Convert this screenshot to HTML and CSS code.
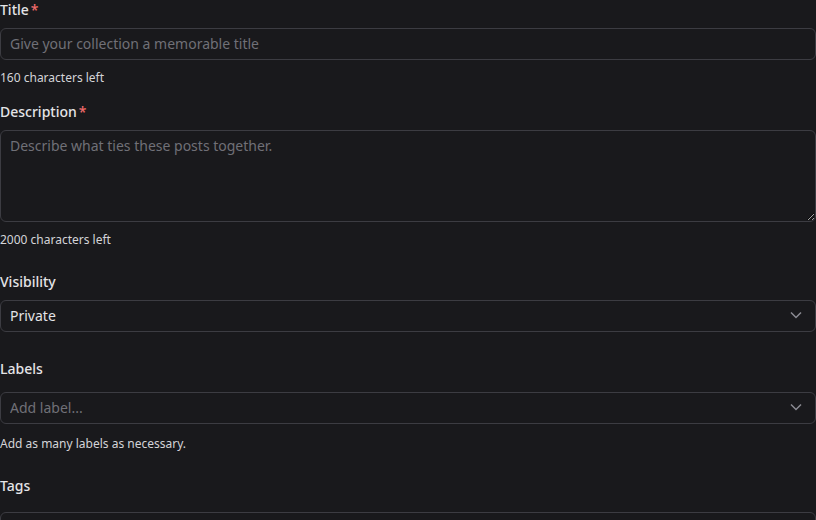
FILE: index.html
```html
<!DOCTYPE html>
<html lang="en">
<head>
    <meta charset="UTF-8">
    <title>New Collection</title>

    <link rel="stylesheet" href="styles.css">
</head>
<body>
    <form class="collectionForm">
        <div class="field field-title">
            <label class="fieldLabel" for="title">Title<span class="required">*</span></label>
            <input class="textInput" type="text" id="title" name="title" placeholder="Give your collection a memorable title">
            <p class="fieldHelp">160 characters left</p>
        </div>

        <div class="field field-description">
            <label class="fieldLabel" for="description">Description<span class="required">*</span></label>
            <textarea class="textInput textArea" id="description" name="description" placeholder="Describe what ties these posts together."></textarea>
            <p class="fieldHelp">2000 characters left</p>
        </div>

        <div class="field field-visibility">
            <label class="fieldLabel" for="visibility">Visibility</label>
            <div class="selectBox" id="visibility">
                <span class="selectValue">Private</span>
                <svg class="chevron" width="12" height="8" viewBox="0 0 12 8"><path d="M1 1.5l5 5 5-5" fill="none" stroke="currentColor" stroke-width="1.5"/></svg>
            </div>
        </div>

        <div class="field field-labels">
            <label class="fieldLabel fieldLabel-wide" for="labels">Labels</label>
            <div class="selectBox">
                <input class="comboInput" type="text" id="labels" name="labels" placeholder="Add label...">
                <svg class="chevron" width="12" height="8" viewBox="0 0 12 8"><path d="M1 1.5l5 5 5-5" fill="none" stroke="currentColor" stroke-width="1.5"/></svg>
            </div>
            <p class="fieldHelp fieldHelp-loose">Add as many labels as necessary.</p>
        </div>

        <div class="field field-tags">
            <label class="fieldLabel fieldLabel-wider" for="tags">Tags</label>
            <div class="selectBox">
                <input class="comboInput" type="text" id="tags" name="tags" placeholder="Add tag...">
            </div>
        </div>
    </form>
</body>
</html>
```

FILE: styles.css
```css
* {
    box-sizing: border-box;
}

html, body {
    background: #19191c;
}

body {
    font-family: "Noto Sans", "Open Sans", sans-serif;
    color: #e4e4e7;
    margin: 0;
    padding: 0;
}

.collectionForm {
    display: flex;
    flex-direction: column;
}

.field {
    display: flex;
    flex-direction: column;
}

.field-title {
    margin-bottom: 16px;
}

.field-description {
    margin-bottom: 24px;
}

.field-visibility {
    margin-bottom: 27px;
}

.field-labels {
    margin-bottom: 24px;
}

.fieldLabel {
    font-size: 14px;
    line-height: 20px;
    font-weight: 500;
    color: #e4e4e7;
    margin-bottom: 8px;
}

.fieldLabel-wide {
    margin-bottom: 13px;
}

.fieldLabel-wider {
    margin-bottom: 16px;
}

.required {
    color: #f26b6b;
    margin-left: 2px;
}

.textInput {
    display: block;
    width: 100%;
    height: 32px;
    padding: 0 9px 2px;
    font-family: inherit;
    font-size: 14px;
    color: #e4e4e7;
    background: #19191c;
    border: 1px solid #3c3c42;
    border-radius: 6px;
    outline: none;
}

.textInput::placeholder,
.comboInput::placeholder {
    color: #707077;
}

.textArea {
    height: 92px;
    padding: 5px 9px;
    line-height: 20px;
    resize: vertical;
}

.fieldHelp {
    font-size: 12px;
    line-height: 16px;
    color: #d4d4d8;
    margin: 10px 0 0;
}

.fieldHelp-loose {
    margin-top: 12px;
}

.selectBox {
    display: flex;
    align-items: center;
    height: 32px;
    padding: 0 13px 2px 9px;
    border: 1px solid #3c3c42;
    border-radius: 6px;
    background: #19191c;
}

.selectValue {
    flex: 1;
    font-size: 14px;
    color: #e4e4e7;
}

.comboInput {
    flex: 1;
    min-width: 0;
    height: 100%;
    padding: 0;
    font-family: inherit;
    font-size: 14px;
    color: #e4e4e7;
    background: transparent;
    border: none;
    outline: none;
}

.chevron {
    color: #8b8b92;
    flex: none;
}
```
